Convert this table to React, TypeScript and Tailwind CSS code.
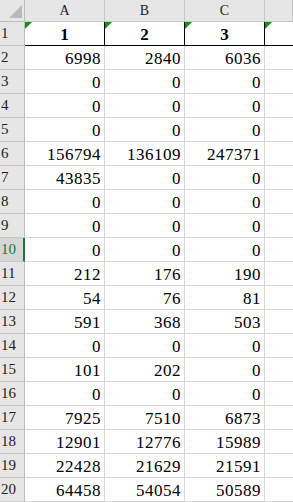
const rows: (number | string)[][] = [
  [6998, 2840, 6036],
  [0, 0, 0],
  [0, 0, 0],
  [0, 0, 0],
  [156794, 136109, 247371],
  [43835, 0, 0],
  [0, 0, 0],
  [0, 0, 0],
  [0, 0, 0],
  [212, 176, 190],
  [54, 76, 81],
  [591, 368, 503],
  [0, 0, 0],
  [101, 202, 0],
  [0, 0, 0],
  [7925, 7510, 6873],
  [12901, 12776, 15989],
  [22428, 21629, 21591],
  [64458, 54054, 50589],
];

function GreenFlag() {
  return (
    <svg className="absolute left-0 top-0" width="7" height="7" viewBox="0 0 7 7">
      <polygon points="0,0 7,0 0,7" fill="#1f8a1f" />
    </svg>
  );
}

function RowHead({ n, active }: { n: number; active?: boolean }) {
  return (
    <div
      className={`h-6 flex items-center pl-[1px] border-b border-[#c8c8c8] text-[15px] ${
        active
          ? "bg-[#d6d6d6] text-[#217346] border-r-2 border-r-[#217346]"
          : "bg-[#e6e6e6] text-[#222] border-r border-r-[#bdbdbd]"
      }`}
    >
      {n}
    </div>
  );
}

export default function App() {
  return (
    <div
      className="w-[293px] h-[502px] overflow-hidden bg-white text-black"
      style={{ fontFamily: '"Liberation Serif", "Times New Roman", serif' }}
    >
      <div className="grid grid-cols-[25px_80px_80px_80px_1fr]">
        {/* column headers */}
        <div className="relative h-[22px] bg-[#e6e6e6] border-r border-b border-[#bdbdbd]">
          <svg className="absolute right-[2px] bottom-[3px]" width="13" height="13" viewBox="0 0 13 13">
            <polygon points="13,0 13,13 0,13" fill="#bababa" />
          </svg>
        </div>
        {["A", "B", "C", ""].map((c, i) => (
          <div
            key={i}
            className="h-[22px] flex items-center justify-center bg-[#e6e6e6] border-r border-b border-[#c8c8c8] text-[14px] text-[#222]"
          >
            {c}
          </div>
        ))}

        {/* row 1 */}
        <RowHead n={1} />
        {["1", "2", "3", ""].map((v, i) => (
          <div
            key={i}
            className={`relative h-6 flex items-end justify-center leading-[20px] border-b border-b-black font-bold text-[17px] ${
              i < 3 ? "border-r border-r-black" : ""
            }`}
          >
            <GreenFlag />
            {v}
          </div>
        ))}

        {/* data rows */}
        {rows.map((r, ri) => (
          <div key={ri} className="contents">
            <RowHead n={ri + 2} active={ri + 2 === 10} />
            {r.map((v, ci) => (
              <div
                key={ci}
                className="h-6 flex items-end justify-end pr-[3px] leading-[20px] border-r border-b border-[#d9d9d9] text-[17px] tracking-[0.5px]"
              >
                {v}
              </div>
            ))}
            <div className="h-6 border-b border-[#d9d9d9]" />
          </div>
        ))}
      </div>
    </div>
  );
}
